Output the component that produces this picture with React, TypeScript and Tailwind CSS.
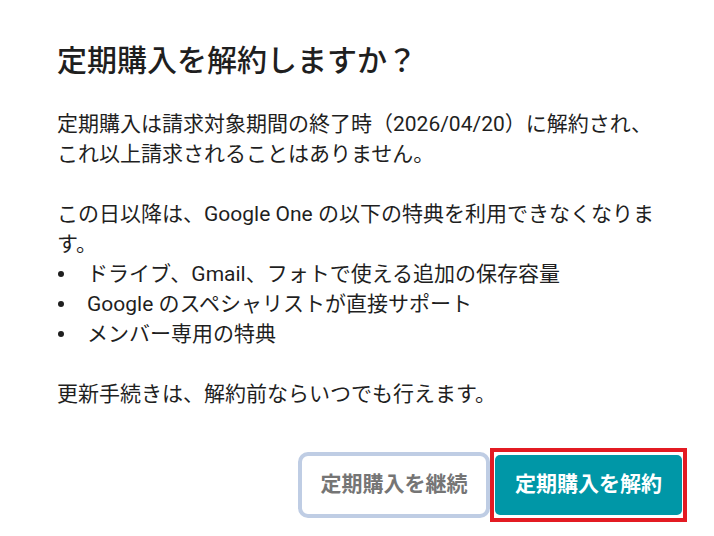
import React from 'react';

const font = { fontFamily: 'Roboto, "Noto Sans CJK JP", sans-serif' };

const perks = [
  'ドライブ、Gmail、フォトで使える追加の保存容量',
  'Google のスペシャリストが直接サポート',
  'メンバー専用の特典',
];

export default function App() {
  return (
    <div
      className="w-[714px] h-[536px] bg-white text-[#1f1f1f] overflow-hidden"
      style={font}
    >
      <div className="pl-[57px] pr-[27px] pt-[41px]">
        <h1 className="text-[30px] leading-[40px] font-medium">
          定期購入を解約しますか？
        </h1>

        <div className="mt-[28px] text-[21px] leading-[30px]">
          <p>
            定期購入は請求対象期間の終了時（2026/04/20）に解約され、
            <br />
            これ以上請求されることはありません。
          </p>
          <p className="mt-[30px]">
            この日以降は、Google One の以下の特典を利用できなくなりま
            <br />
            す。
          </p>
          <ul>
            {perks.map((perk) => (
              <li key={perk} className="flex items-center h-[30px]">
                <span className="w-[6px] h-[6px] rounded-full bg-[#1f1f1f] ml-[1px]" />
                <span className="ml-[23px]">{perk}</span>
              </li>
            ))}
          </ul>
          <p className="mt-[30px]">更新手続きは、解約前ならいつでも行えます。</p>
        </div>

        <div className="mt-[39px] flex items-center justify-end h-[74px]">
          <button className="w-[192px] h-[66px] border-[4px] border-[#bfcde4] rounded-[10px] bg-white text-[#757575] font-bold text-[21px]">
            定期購入を継続
          </button>
          <div className="border-[4px] border-[#e31b23] px-[1px] py-[3px]">
            <button className="block w-[187px] h-[60px] rounded-[5px] bg-[#0097a7] text-white font-bold text-[21px]">
              定期購入を解約
            </button>
          </div>
        </div>
      </div>
    </div>
  );
}
